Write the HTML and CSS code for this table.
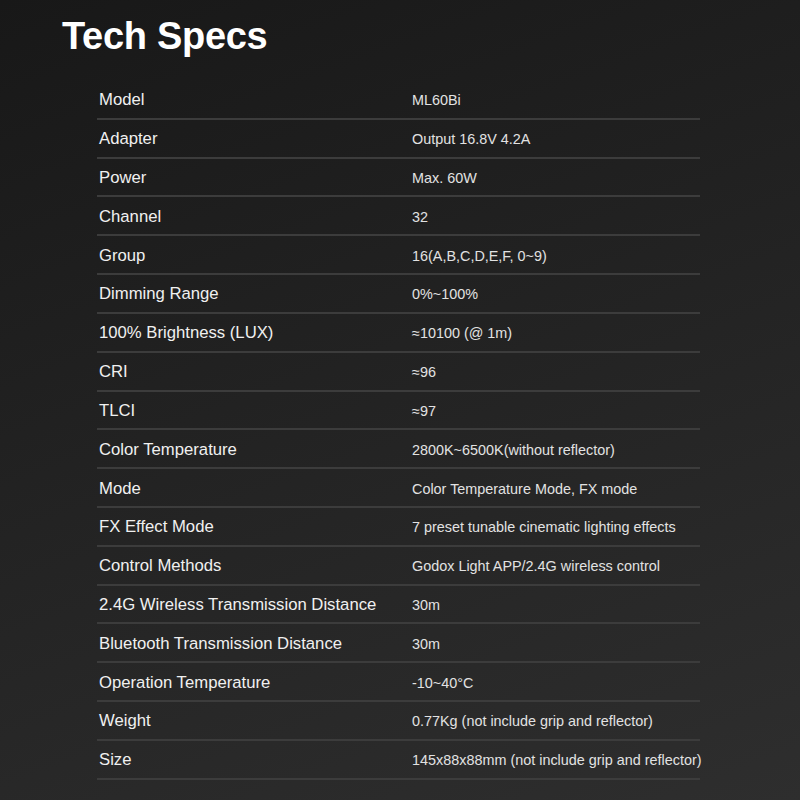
FILE: index.html
```html
<!DOCTYPE html>
<html>
<head>
<meta charset="utf-8">
<link rel="stylesheet" href="styles.css">
</head>
<body>
<main class="page">
  <h1 class="title">Tech Specs</h1>
  <div class="specs">
    <div class="row"><span class="label">Model</span><span class="value">ML60Bi</span></div>
    <div class="row"><span class="label">Adapter</span><span class="value">Output 16.8V 4.2A</span></div>
    <div class="row"><span class="label">Power</span><span class="value">Max. 60W</span></div>
    <div class="row"><span class="label">Channel</span><span class="value">32</span></div>
    <div class="row"><span class="label">Group</span><span class="value">16(A,B,C,D,E,F, 0~9)</span></div>
    <div class="row"><span class="label">Dimming Range</span><span class="value">0%~100%</span></div>
    <div class="row"><span class="label">100% Brightness (LUX)</span><span class="value">≈10100 (@ 1m)</span></div>
    <div class="row"><span class="label">CRI</span><span class="value">≈96</span></div>
    <div class="row"><span class="label">TLCI</span><span class="value">≈97</span></div>
    <div class="row"><span class="label">Color Temperature</span><span class="value">2800K~6500K(without reflector)</span></div>
    <div class="row"><span class="label">Mode</span><span class="value">Color Temperature Mode, FX mode</span></div>
    <div class="row"><span class="label">FX Effect Mode</span><span class="value">7 preset tunable cinematic lighting effects</span></div>
    <div class="row"><span class="label">Control Methods</span><span class="value">Godox Light APP/2.4G wireless control</span></div>
    <div class="row"><span class="label">2.4G Wireless Transmission Distance</span><span class="value">30m</span></div>
    <div class="row"><span class="label">Bluetooth Transmission Distance</span><span class="value">30m</span></div>
    <div class="row"><span class="label">Operation Temperature</span><span class="value">-10~40°C</span></div>
    <div class="row"><span class="label">Weight</span><span class="value">0.77Kg (not include grip and reflector)</span></div>
    <div class="row"><span class="label">Size</span><span class="value">145x88x88mm (not include grip and reflector)</span></div>
  </div>
</main>
</body>
</html>
```

FILE: styles.css
```css
html, body {
  margin: 0;
  padding: 0;
}
body {
  width: 800px;
  height: 800px;
  overflow: hidden;
  background: linear-gradient(160deg, #181818 0%, #222222 45%, #2e2e2e 100%);
  font-family: "Liberation Sans", Arial, sans-serif;
}
.page {
  padding: 0 0 0 62px;
}
.title {
  margin: 0;
  padding-top: 14px;
  height: 81px;
  box-sizing: border-box;
  font-size: 38px;
  line-height: 44px;
  font-weight: bold;
  color: #ffffff;
  letter-spacing: -0.3px;
}
.specs {
  margin-left: 35px;
  width: 603px;
}
.row {
  display: grid;
  grid-template-columns: 313px 1fr;
  align-items: center;
  height: 38.82px;
  box-sizing: border-box;
  padding: 2px 0 0 2px;
  border-bottom: 2px solid #3c3c3c;
  white-space: nowrap;
}
.label {
  font-size: 16.7px;
  color: #f0f0f0;
}
.value {
  font-size: 14.4px;
  color: #e2e2e2;
}
```
